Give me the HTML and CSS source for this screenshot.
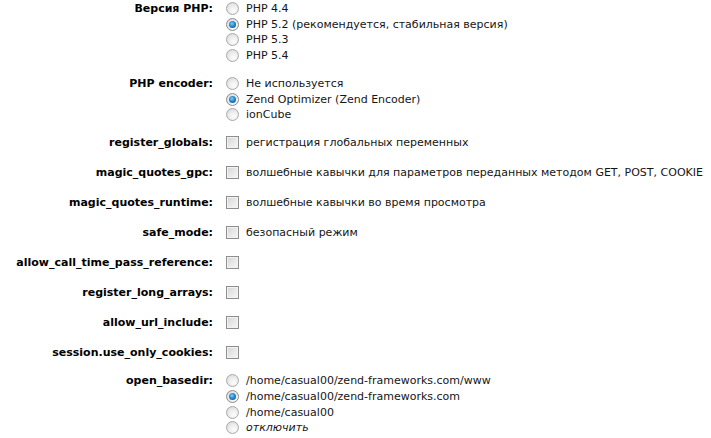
FILE: index.html
```html
<!DOCTYPE html>
<html lang="ru">
<head>
<meta charset="utf-8">
<link rel="stylesheet" href="styles.css">
</head>
<body>
<div class="form">
  <div class="row">
    <div class="label">Версия PHP:</div>
    <div class="opts">
      <label class="opt"><span class="radio"></span>PHP 4.4</label>
      <label class="opt"><span class="radio on"></span>PHP 5.2 (рекомендуется, стабильная версия)</label>
      <label class="opt"><span class="radio"></span>PHP 5.3</label>
      <label class="opt"><span class="radio"></span>PHP 5.4</label>
    </div>
  </div>
  <div class="row">
    <div class="label">PHP encoder:</div>
    <div class="opts">
      <label class="opt"><span class="radio"></span>Не используется</label>
      <label class="opt"><span class="radio on"></span>Zend Optimizer (Zend Encoder)</label>
      <label class="opt"><span class="radio"></span>ionCube</label>
    </div>
  </div>
  <div class="row cb">
    <div class="label">register_globals:</div>
    <div class="opts"><label class="opt"><span class="check"></span>регистрация глобальных переменных</label></div>
  </div>
  <div class="row cb">
    <div class="label">magic_quotes_gpc:</div>
    <div class="opts"><label class="opt"><span class="check"></span>волшебные кавычки для параметров переданных методом GET, POST, COOKIE</label></div>
  </div>
  <div class="row cb">
    <div class="label">magic_quotes_runtime:</div>
    <div class="opts"><label class="opt"><span class="check"></span>волшебные кавычки во время просмотра</label></div>
  </div>
  <div class="row cb">
    <div class="label">safe_mode:</div>
    <div class="opts"><label class="opt"><span class="check"></span>безопасный режим</label></div>
  </div>
  <div class="row cb">
    <div class="label">allow_call_time_pass_reference:</div>
    <div class="opts"><label class="opt"><span class="check"></span></label></div>
  </div>
  <div class="row cb">
    <div class="label">register_long_arrays:</div>
    <div class="opts"><label class="opt"><span class="check"></span></label></div>
  </div>
  <div class="row cb">
    <div class="label">allow_url_include:</div>
    <div class="opts"><label class="opt"><span class="check"></span></label></div>
  </div>
  <div class="row cb">
    <div class="label">session.use_only_cookies:</div>
    <div class="opts"><label class="opt"><span class="check"></span></label></div>
  </div>
  <div class="row">
    <div class="label">open_basedir:</div>
    <div class="opts">
      <label class="opt"><span class="radio"></span>/home/casual00/zend-frameworks.com/www</label>
      <label class="opt"><span class="radio on"></span>/home/casual00/zend-frameworks.com</label>
      <label class="opt"><span class="radio"></span>/home/casual00</label>
      <label class="opt"><span class="radio"></span><em>отключить</em></label>
    </div>
  </div>
</div>
</body>
</html>
```
FILE: styles.css
```css
html, body {
  margin: 0;
  padding: 0;
  background: #fff;
}
body {
  font-family: "DejaVu Sans", "Noto Sans", sans-serif;
  font-size: 11px;
  color: #151515;
}
.form {
  display: flex;
  flex-direction: column;
  gap: 12.33px;
  padding-top: 0.67px;
}
.row {
  display: grid;
  grid-template-columns: 213px 1fr;
  column-gap: 13px;
}
.row.cb + .row.cb {
  margin-top: 2px;
}
.label {
  text-align: right;
  font-weight: bold;
  line-height: 15.67px;
  color: #000;
  white-space: nowrap;
}
.opts {
  display: flex;
  flex-direction: column;
}
.opt {
  display: flex;
  align-items: center;
  height: 15.67px;
  line-height: 15px;
  white-space: nowrap;
}
.opt em {
  font-style: italic;
}
.radio {
  width: 11px;
  height: 11px;
  border: 1px solid #a9a9a9;
  border-radius: 50%;
  background: radial-gradient(circle at 62% 68%, #fdfdfd 0%, #ebebeb 50%, #d2d2d2 100%);
  margin-right: 7px;
  flex: none;
  position: relative;
}
.radio.on {
  border-color: #8c8c8c;
}
.radio.on::after {
  content: "";
  position: absolute;
  left: 2px;
  top: 2px;
  width: 7px;
  height: 7px;
  border-radius: 50%;
  background: radial-gradient(circle at 42% 38%, #7fd0f7 0%, #2589cf 45%, #0d4474 100%);
}
.check {
  width: 11px;
  height: 11px;
  border: 1px solid #8e8e8e;
  background: linear-gradient(135deg, #d4d4d4 0%, #e9e9e9 55%, #f7f7f7 100%);
  box-shadow: inset 0 0 0 1px #f2f2f2;
  margin-right: 7px;
  flex: none;
}
```
